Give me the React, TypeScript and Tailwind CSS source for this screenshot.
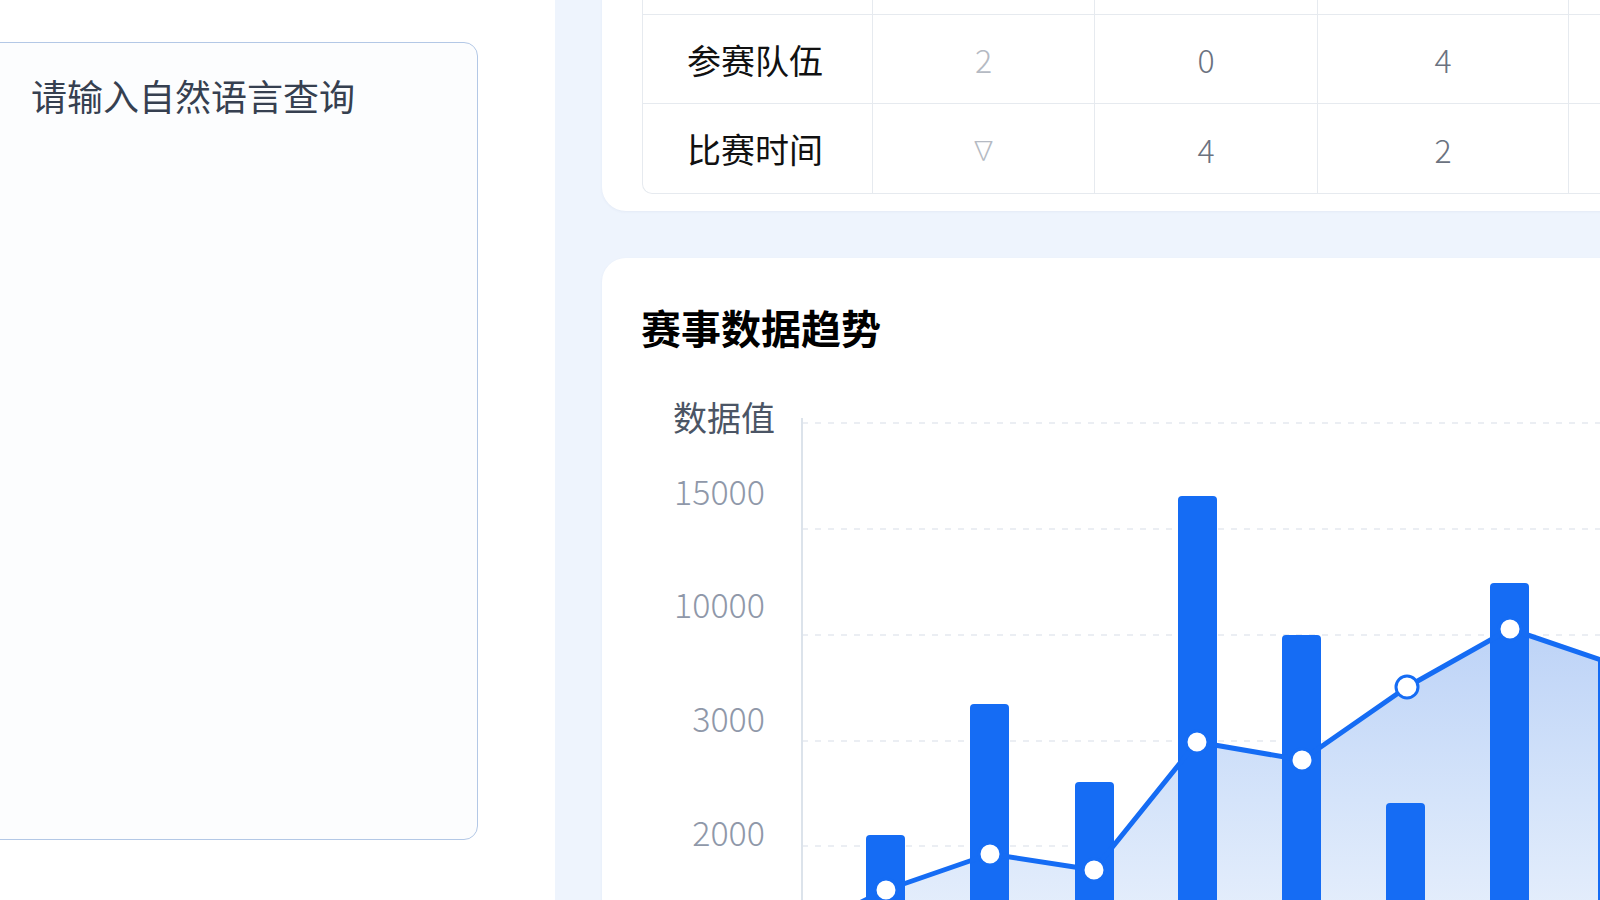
import React from 'react';

const rows = [
  { label: '', values: ['', '', '', ''] },
  { label: '参赛队伍', values: ['2', '0', '4', ''] },
  { label: '比赛时间', values: ['∇', '4', '2', ''] },
];

const rowHeights = ['h-[88px]', 'h-[89px]', 'h-[89px]'];

// chart coords are relative to the svg origin (641, 380) on the page
const bars = [
  { x: 225, top: 455 },
  { x: 329, top: 324 },
  { x: 434, top: 402 },
  { x: 537, top: 116 },
  { x: 641, top: 255 },
  { x: 745, top: 423 },
  { x: 849, top: 203 },
  { x: 957, top: 278 },
];

const points: [number, number][] = [
  [245, 510],
  [349, 474],
  [453, 490],
  [556, 362],
  [661, 380],
  [766, 307],
  [869, 249],
  [975, 285],
];

const ticks = [
  { label: '15000', y: 110 },
  { label: '10000', y: 223 },
  { label: '3000', y: 337 },
  { label: '2000', y: 451 },
];

const grid = [43, 149, 255, 361, 466];

function TrendChart() {
  const linePath = 'M 204 530 ' + points.map(([x, y]) => `L ${x} ${y}`).join(' ');
  const areaPath = linePath + ' L 975 560 L 204 560 Z';

  return (
    <svg width="1000" height="560" viewBox="0 0 1000 560" className="block">
      <defs>
        <linearGradient id="area" x1="0" y1="0" x2="0" y2="1">
          <stop offset="0" stopColor="#bdd3f7" />
          <stop offset="0.55" stopColor="#d5e4fa" />
          <stop offset="1" stopColor="#e8f0fc" />
        </linearGradient>
      </defs>

      <text x="32" y="36" dominantBaseline="central" fontSize="34" fill="#4b5565">
        数据值
      </text>
      {ticks.map(t => (
        <text
          key={t.label}
          x="124"
          y={t.y}
          textAnchor="end"
          dominantBaseline="central"
          fontSize="34"
          fontWeight="300"
          fill="#8f98a9"
        >
          {t.label}
        </text>
      ))}

      {grid.map(y => (
        <line key={y} x1="161" x2="1000" y1={y} y2={y} stroke="#e5e9ef" strokeWidth="1.5" strokeDasharray="6 7" />
      ))}
      <line x1="161" x2="161" y1="38" y2="560" stroke="#dce3eb" strokeWidth="2" />

      <path d={areaPath} fill="url(#area)" />

      {bars.map(b => (
        <rect key={b.x} x={b.x} y={b.top} width="39" height={600 - b.top} rx="4" fill="#156cf4" />
      ))}

      <path d={linePath} fill="none" stroke="#156cf4" strokeWidth="5" strokeLinejoin="round" />

      {points.slice(0, 7).map(([x, y]) => (
        <circle key={x} cx={x} cy={y} r="11" fill="#ffffff" stroke="#156cf4" strokeWidth="3" />
      ))}
    </svg>
  );
}

export default function App() {
  return (
    <div className="w-[1600px] h-[900px] overflow-hidden flex bg-[#eef4fd] font-['Noto_Sans_CJK_SC','Noto_Sans',sans-serif]">
      {/* query input column */}
      <div className="w-[555px] shrink-0 bg-white pt-[42px]">
        <div className="-ml-[40px] w-[518px] h-[798px] rounded-[14px] border-[1.5px] border-[#b3c8e6] bg-[#fcfdfe] pl-[70px] pt-[30px]">
          <p className="text-[36px] leading-[44px] text-[#364050]">请输入自然语言查询</p>
        </div>
      </div>

      {/* content column */}
      <div className="w-[1045px] shrink-0 pl-[47px] flex flex-col gap-[47px]">
        <div className="-mt-[90px] w-[1040px] rounded-[24px] bg-white pl-[40px] pt-[17px] pb-[17px] shadow-[0_1px_3px_rgba(30,60,120,0.05)]">
          <div className="border-l border-b border-[#e6eaef] rounded-bl-[10px] overflow-hidden">
            {rows.map((row, i) => (
              <div
                key={i}
                className={`grid grid-cols-[230px_222px_223px_251px_300px] ${rowHeights[i]} ${i < rows.length - 1 ? 'border-b border-[#e6eaef]' : ''}`}
              >
                <div className="border-r border-[#e6eaef] flex items-center pl-[44px] text-[34px] text-[#111111]">
                  {row.label}
                </div>
                {row.values.map((v, j) => (
                  <div
                    key={j}
                    className={`border-r border-[#e6eaef] flex items-center justify-center font-light ${j === 0 ? 'text-[#b5bac3]' : 'text-[#6b7280]'} ${v === '∇' ? 'text-[26px]' : 'text-[32px]'}`}
                  >
                    {v}
                  </div>
                ))}
              </div>
            ))}
          </div>
        </div>

        <div className="flex-1 w-[1040px] rounded-t-[24px] bg-white pl-[39px] pt-[45px] overflow-hidden shadow-[0_1px_3px_rgba(30,60,120,0.05)]">
          <h2 className="text-[40px] leading-[48px] font-bold text-black">赛事数据趋势</h2>
          <div className="mt-[29px]">
            <TrendChart />
          </div>
        </div>
      </div>
    </div>
  );
}
